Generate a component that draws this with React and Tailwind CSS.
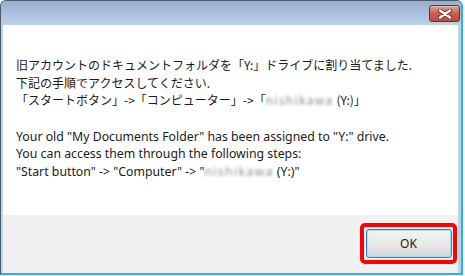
import React from "react";

const CloseGlyph = () => (
  <svg width="14" height="10" viewBox="0 0 14 10">
    <path
      d="M2 1.5 L12 8.5 M12 1.5 L2 8.5"
      stroke="#5a2a25"
      strokeWidth="4.2"
      strokeLinecap="round"
    />
    <path
      d="M2 1.5 L12 8.5 M12 1.5 L2 8.5"
      stroke="#ffffff"
      strokeWidth="2.6"
      strokeLinecap="round"
    />
  </svg>
);

const Hidden = ({ children }) => (
  <span className="text-[#8e8e8e] blur-[1.4px] tracking-[1.3px]">{children}</span>
);

export default function App() {
  return (
    <div className="w-[465px] h-[276px] bg-white font-['Noto_Sans','Noto_Sans_CJK_JP',sans-serif] text-[12px] text-[#1b1b1b]">
      {/* window frame */}
      <div className="w-[463px] h-[275px] flex flex-col rounded-t-[6px] border-l border-t border-[#4a5a6d] border-r-2 border-b-2 border-r-[#30b0d2] border-b-[#30b0d2] bg-[#bcd3ec] overflow-hidden">
        {/* title bar */}
        <div className="h-[24px] shrink-0 flex justify-end items-start pt-[4px] pr-[1px] bg-gradient-to-b from-[#98afcd] to-[#bcd2eb]">
          <div className="w-[31px] h-[17px] rounded-[3px] border border-[#6e2c26] bg-gradient-to-b from-[#e3a293] via-[#cb5e4e] to-[#bd4a3c] shadow-[inset_0_1px_0_#f0c2b7] flex items-center justify-center">
            <CloseGlyph />
          </div>
        </div>

        {/* body */}
        <div className="flex-1 flex flex-col ml-[2px] mr-[3px]">
          <div className="h-[190px] bg-white pl-[13px] pt-[31px] leading-[17.5px]">
            <div className="font-['Noto_Sans_CJK_JP',sans-serif]">
              <p>旧アカウントのドキュメントフォルダを「Y:」ドライブに割り当てました.</p>
              <p>下記の手順でアクセスしてください.</p>
              <p>
                「スタートボタン」-&gt;「コンピューター」-&gt;「<Hidden>nishikawa</Hidden> (Y:)」
              </p>
            </div>
            <div className="mt-[19px] text-[12.3px]">
              <p>Your old "My Documents Folder" has been assigned to "Y:" drive.</p>
              <p>You can access them through the following steps:</p>
              <p>
                "Start button" -&gt; "Computer" -&gt; "<Hidden>nishikawa</Hidden> (Y:)"
              </p>
            </div>
          </div>

          {/* footer */}
          <div className="flex-1 bg-[#f0f0f0] flex justify-end items-start pt-[8px] pr-[1px]">
            <div className="w-[97px] h-[41px] rounded-[5px] border-4 border-[#ff0000] flex items-center justify-center">
              <button className="w-[86px] h-[29px] rounded-[3px] border border-[#3c7fb1] bg-gradient-to-b from-[#f3f3f3] via-[#e9e9e9] to-[#d4d4d4] shadow-[inset_0_0_0_1px_#9fe0f8] text-[12px] text-[#1b1b1b]">
                OK
              </button>
            </div>
          </div>
        </div>
      </div>
    </div>
  );
}
